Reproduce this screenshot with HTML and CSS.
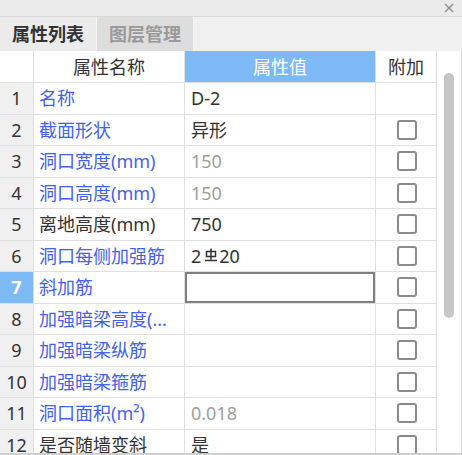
FILE: index.html
```html
<!DOCTYPE html>
<html lang="zh">
<head>
<meta charset="utf-8">
<link rel="stylesheet" href="styles.css">
</head>
<body>
<div class="panel">
  <div class="titlebar">
    <svg class="close" width="10" height="10" viewBox="0 0 10 10"><path d="M1 1L9 9M9 1L1 9" stroke="#8a8a8a" stroke-width="1.3" fill="none"/></svg>
  </div>
  <div class="tabs">
    <div class="tab active">属性列表</div>
    <div class="tab">图层管理</div>
    <div class="tab-rest"></div>
  </div>
  <div class="body">
    <div class="grid">
      <div class="hd num"></div>
      <div class="hd">属性名称</div>
      <div class="hd sel">属性值</div>
      <div class="hd">附加</div>

      <div class="num">1</div><div class="name">名称</div><div class="val">D-2</div><div class="chk"></div>
      <div class="num">2</div><div class="name">截面形状</div><div class="val">异形</div><div class="chk"><span class="box"></span></div>
      <div class="num">3</div><div class="name">洞口宽度(mm)</div><div class="val gray">150</div><div class="chk"><span class="box"></span></div>
      <div class="num">4</div><div class="name">洞口高度(mm)</div><div class="val gray">150</div><div class="chk"><span class="box"></span></div>
      <div class="num">5</div><div class="name black">离地高度(mm)</div><div class="val">750</div><div class="chk"><span class="box"></span></div>
      <div class="num">6</div><div class="name">洞口每侧加强筋</div><div class="val">2<svg class="rebar" width="14" height="16" viewBox="0 0 14 16"><path d="M7 1.5V12.5M2.5 4.5H11.5A0 0 0 0 1 11.5 4.5V9.5H2.5V4.5ZM1 13.5H13" stroke="#333" stroke-width="1.5" fill="none"/></svg>20</div><div class="chk"><span class="box"></span></div>
      <div class="num cur">7</div><div class="name">斜加筋</div><div class="val edit"></div><div class="chk"><span class="box"></span></div>
      <div class="num">8</div><div class="name">加强暗梁高度(...</div><div class="val"></div><div class="chk"><span class="box"></span></div>
      <div class="num">9</div><div class="name">加强暗梁纵筋</div><div class="val"></div><div class="chk"><span class="box"></span></div>
      <div class="num">10</div><div class="name">加强暗梁箍筋</div><div class="val"></div><div class="chk"><span class="box"></span></div>
      <div class="num">11</div><div class="name">洞口面积(m²)</div><div class="val gray">0.018</div><div class="chk"><span class="box"></span></div>
      <div class="num">12</div><div class="name black">是否随墙变斜</div><div class="val">是</div><div class="chk"><span class="box"></span></div>
    </div>
    <div class="scroll"><div class="thumb"></div></div>
  </div>
</div>
</body>
</html>
```
FILE: styles.css
```css
* { box-sizing: border-box; }
html, body { margin: 0; padding: 0; background: #fff; }
body {
  width: 462px;
  height: 455px;
  overflow: hidden;
  font-family: "Noto Sans", "Noto Sans CJK SC", sans-serif;
  font-size: 18px;
  color: #333;
}
.panel {
  width: 462px;
  height: 455px;
  overflow: hidden;
  border-bottom: 2px solid #cfcfcf;
  display: flex;
  flex-direction: column;
}
.titlebar {
  height: 17px;
  flex: none;
  background: #ebebeb;
  border-bottom: 1px solid #d9d9d9;
  display: flex;
  justify-content: flex-end;
  align-items: center;
  padding-right: 8px;
}
.close { display: block; }
.tabs {
  height: 34px;
  flex: none;
  display: flex;
  background: #f0f0f0;
}
.tab {
  width: 97px;
  display: flex;
  align-items: center;
  justify-content: center;
  background: #dddddd;
  color: #9a9a9a;
  font-weight: bold;
  border-right: 1px solid #f4f4f4;
  line-height: 1;
}
.tab.active {
  background: #ebebeb;
  color: #333;
}
.tab-rest { flex: 1; }
.body {
  flex: 1;
  display: flex;
  min-height: 0;
}
.grid {
  width: 437px;
  flex: none;
  display: grid;
  grid-template-columns: 33px 150px 190px 60px;
  grid-template-rows: 31px;
  grid-auto-rows: 30.5px;
  gap: 1px;
  padding-right: 1px;
  background: #e0e0e0;
  align-content: start;
}
.grid > div {
  background: #fff;
  display: flex;
  align-items: center;
  line-height: 1;
  white-space: nowrap;
  overflow: hidden;
}
.hd { justify-content: center; }
.grid > .hd.sel { background: #7db9f5; color: #fff; }
.grid > .num {
  background: #f0f0f0;
  justify-content: center;
  color: #333;
}
.grid > .hd.num { background: #fff; }
.grid > .num.cur {
  background: #7db9f5;
  color: #fff;
  font-weight: bold;
}
.name {
  padding-left: 5px;
  color: #4262f0;
}
.name.black { color: #333; }
.val { padding-left: 6px; color: #333; }
.val.gray { color: #a0a0a0; }
.grid > .val.edit { border: 2px solid #808080; }
.rebar { margin: 0 1px 0 3px; position: relative; top: -1px; }
.chk { justify-content: center; }
.box {
  width: 20px;
  height: 20px;
  border: 2px solid #8c8c8c;
  border-radius: 3px;
  margin-left: 2px;
}
.scroll {
  flex: 1;
  background: #fff;
  border-right: 1px solid #dcdcdc;
  padding-top: 22px;
  padding-left: 7px;
}
.thumb {
  width: 10px;
  height: 245px;
  border-radius: 5px;
  background: #c6c6c6;
}
```
